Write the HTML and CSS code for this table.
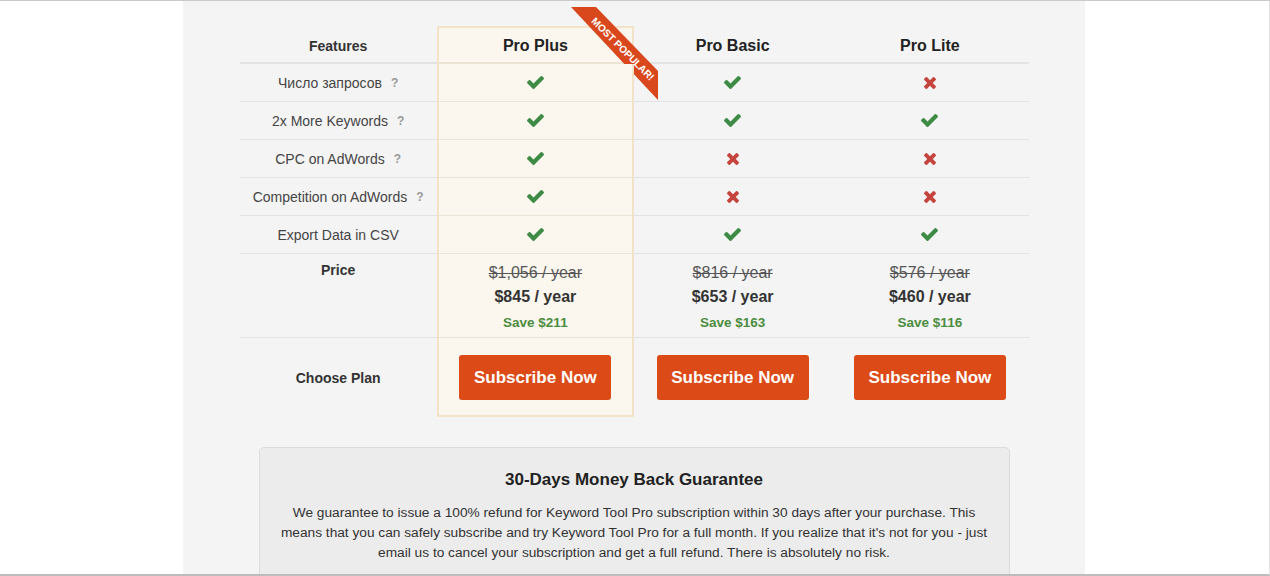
FILE: index.html
```html
<!DOCTYPE html>
<html lang="en">
<head>
    <meta charset="UTF-8">
    <meta name="viewport" content="width=device-width, initial-scale=1.0">
    <title>Keyword Tool Pro - Pricing</title>
    <link rel="stylesheet" href="styles.css">
</head>
<body>
    <div class="page">
        <div class="panel">
            <div class="pricing">
                <!-- header -->
                <div class="cell head">Features</div>
                <div class="cell head plan hl hl-top">
                    Pro Plus
                    <svg class="ribbon" width="87" height="93" viewBox="0 0 87 93">
                        <polygon points="0,0 25,0 87,64 87,93" fill="#d9481c"/>
                        <text x="52" y="42" transform="rotate(45 52 42)" text-anchor="middle" dominant-baseline="central">MOST POPULAR!</text>
                    </svg>
                </div>
                <div class="cell head plan">Pro Basic</div>
                <div class="cell head plan">Pro Lite</div>

                <!-- features -->
                <div class="cell feature">Число запросов <span class="hint">?</span></div>
                <div class="cell hl"><svg class="ok" viewBox="121 334 1550 1188"><path d="M1671 566q0 40-28 68l-724 724-136 136q-28 28-68 28t-68-28l-136-136-362-362q-28-28-28-68t28-68l136-136q28-28 68-28t68 28l294 295 656-657q28-28 68-28t68 28l136 136q28 28 28 68z"/></svg></div>
                <div class="cell"><svg class="ok" viewBox="121 334 1550 1188"><path d="M1671 566q0 40-28 68l-724 724-136 136q-28 28-68 28t-68-28l-136-136-362-362q-28-28-28-68t28-68l136-136q28-28 68-28t68 28l294 295 656-657q28-28 68-28t68 28l136 136q28 28 28 68z"/></svg></div>
                <div class="cell"><svg class="no" viewBox="302 366 1188 1188"><path d="M1490 1322q0 40-28 68l-136 136q-28 28-68 28t-68-28l-294-294-294 294q-28 28-68 28t-68-28l-136-136q-28-28-28-68t28-68l294-294-294-294q-28-28-28-68t28-68l136-136q28-28 68-28t68 28l294 294 294-294q28-28 68-28t68 28l136 136q28 28 28 68t-28 68l-294 294 294 294q28 28 28 68z"/></svg></div>

                <div class="cell feature">2x More Keywords <span class="hint">?</span></div>
                <div class="cell hl"><svg class="ok" viewBox="121 334 1550 1188"><path d="M1671 566q0 40-28 68l-724 724-136 136q-28 28-68 28t-68-28l-136-136-362-362q-28-28-28-68t28-68l136-136q28-28 68-28t68 28l294 295 656-657q28-28 68-28t68 28l136 136q28 28 28 68z"/></svg></div>
                <div class="cell"><svg class="ok" viewBox="121 334 1550 1188"><path d="M1671 566q0 40-28 68l-724 724-136 136q-28 28-68 28t-68-28l-136-136-362-362q-28-28-28-68t28-68l136-136q28-28 68-28t68 28l294 295 656-657q28-28 68-28t68 28l136 136q28 28 28 68z"/></svg></div>
                <div class="cell"><svg class="ok" viewBox="121 334 1550 1188"><path d="M1671 566q0 40-28 68l-724 724-136 136q-28 28-68 28t-68-28l-136-136-362-362q-28-28-28-68t28-68l136-136q28-28 68-28t68 28l294 295 656-657q28-28 68-28t68 28l136 136q28 28 28 68z"/></svg></div>

                <div class="cell feature">CPC on AdWords <span class="hint">?</span></div>
                <div class="cell hl"><svg class="ok" viewBox="121 334 1550 1188"><path d="M1671 566q0 40-28 68l-724 724-136 136q-28 28-68 28t-68-28l-136-136-362-362q-28-28-28-68t28-68l136-136q28-28 68-28t68 28l294 295 656-657q28-28 68-28t68 28l136 136q28 28 28 68z"/></svg></div>
                <div class="cell"><svg class="no" viewBox="302 366 1188 1188"><path d="M1490 1322q0 40-28 68l-136 136q-28 28-68 28t-68-28l-294-294-294 294q-28 28-68 28t-68-28l-136-136q-28-28-28-68t28-68l294-294-294-294q-28-28-28-68t28-68l136-136q28-28 68-28t68 28l294 294 294-294q28-28 68-28t68 28l136 136q28 28 28 68t-28 68l-294 294 294 294q28 28 28 68z"/></svg></div>
                <div class="cell"><svg class="no" viewBox="302 366 1188 1188"><path d="M1490 1322q0 40-28 68l-136 136q-28 28-68 28t-68-28l-294-294-294 294q-28 28-68 28t-68-28l-136-136q-28-28-28-68t28-68l294-294-294-294q-28-28-28-68t28-68l136-136q28-28 68-28t68 28l294 294 294-294q28-28 68-28t68 28l136 136q28 28 28 68t-28 68l-294 294 294 294q28 28 28 68z"/></svg></div>

                <div class="cell feature">Competition on AdWords <span class="hint">?</span></div>
                <div class="cell hl"><svg class="ok" viewBox="121 334 1550 1188"><path d="M1671 566q0 40-28 68l-724 724-136 136q-28 28-68 28t-68-28l-136-136-362-362q-28-28-28-68t28-68l136-136q28-28 68-28t68 28l294 295 656-657q28-28 68-28t68 28l136 136q28 28 28 68z"/></svg></div>
                <div class="cell"><svg class="no" viewBox="302 366 1188 1188"><path d="M1490 1322q0 40-28 68l-136 136q-28 28-68 28t-68-28l-294-294-294 294q-28 28-68 28t-68-28l-136-136q-28-28-28-68t28-68l294-294-294-294q-28-28-28-68t28-68l136-136q28-28 68-28t68 28l294 294 294-294q28-28 68-28t68 28l136 136q28 28 28 68t-28 68l-294 294 294 294q28 28 28 68z"/></svg></div>
                <div class="cell"><svg class="no" viewBox="302 366 1188 1188"><path d="M1490 1322q0 40-28 68l-136 136q-28 28-68 28t-68-28l-294-294-294 294q-28 28-68 28t-68-28l-136-136q-28-28-28-68t28-68l294-294-294-294q-28-28-28-68t28-68l136-136q28-28 68-28t68 28l294 294 294-294q28-28 68-28t68 28l136 136q28 28 28 68t-28 68l-294 294 294 294q28 28 28 68z"/></svg></div>

                <div class="cell feature">Export Data in CSV</div>
                <div class="cell hl"><svg class="ok" viewBox="121 334 1550 1188"><path d="M1671 566q0 40-28 68l-724 724-136 136q-28 28-68 28t-68-28l-136-136-362-362q-28-28-28-68t28-68l136-136q28-28 68-28t68 28l294 295 656-657q28-28 68-28t68 28l136 136q28 28 28 68z"/></svg></div>
                <div class="cell"><svg class="ok" viewBox="121 334 1550 1188"><path d="M1671 566q0 40-28 68l-724 724-136 136q-28 28-68 28t-68-28l-136-136-362-362q-28-28-28-68t28-68l136-136q28-28 68-28t68 28l294 295 656-657q28-28 68-28t68 28l136 136q28 28 28 68z"/></svg></div>
                <div class="cell"><svg class="ok" viewBox="121 334 1550 1188"><path d="M1671 566q0 40-28 68l-724 724-136 136q-28 28-68 28t-68-28l-136-136-362-362q-28-28-28-68t28-68l136-136q28-28 68-28t68 28l294 295 656-657q28-28 68-28t68 28l136 136q28 28 28 68z"/></svg></div>

                <!-- prices -->
                <div class="cell price-row label">Price</div>
                <div class="cell price-row hl">
                    <span class="old">$1,056 / year</span>
                    <span class="now">$845 / year</span>
                    <span class="save">Save $211</span>
                </div>
                <div class="cell price-row">
                    <span class="old">$816 / year</span>
                    <span class="now">$653 / year</span>
                    <span class="save">Save $163</span>
                </div>
                <div class="cell price-row">
                    <span class="old">$576 / year</span>
                    <span class="now">$460 / year</span>
                    <span class="save">Save $116</span>
                </div>

                <!-- subscribe -->
                <div class="cell choose label">Choose Plan</div>
                <div class="cell choose hl hl-bottom"><a class="btn" href="#">Subscribe Now</a></div>
                <div class="cell choose"><a class="btn" href="#">Subscribe Now</a></div>
                <div class="cell choose"><a class="btn" href="#">Subscribe Now</a></div>
            </div>

            <div class="guarantee">
                <h3>30-Days Money Back Guarantee</h3>
                <p>We guarantee to issue a 100% refund for Keyword Tool Pro subscription within 30 days after your purchase. This means that you can safely subscribe and try Keyword Tool Pro for a full month. If you realize that it's not for you - just email us to cancel your subscription and get a full refund. There is absolutely no risk.</p>
            </div>
        </div>
    </div>
</body>
</html>
```

FILE: styles.css
```css
body, html {
    margin: 0;
    padding: 0;
    background: #fff;
    font-family: 'Liberation Sans', Arial, sans-serif;
    color: #333;
}

.page {
    height: 576px;
    box-sizing: border-box;
    border-top: 1px solid #c9c9c9;
    border-bottom: 2px solid #bdbdbd;
    border-right: 1px solid #e2e2e2;
    overflow: hidden;
}

.panel {
    margin-left: 183px;
    width: 902px;
    height: 100%;
    background: #f4f4f4;
    padding-top: 25px;
    box-sizing: border-box;
}

.pricing {
    width: 789px;
    margin: 0 auto;
    display: grid;
    grid-template-columns: repeat(4, 1fr);
}

.cell {
    box-sizing: border-box;
    height: 38px;
    border-bottom: 1px solid #e3e3e3;
    display: flex;
    align-items: center;
    justify-content: center;
    font-size: 14px;
    color: #444;
}

.head {
    padding-top: 3px;
    border-bottom: 2px solid #e3e3e3;
    font-weight: bold;
    color: #333;
}

.plan {
    font-size: 16px;
    color: #222;
}

.hl {
    position: relative;
    background: #fbf7ef;
    border-left: 2px solid #f3e3c8;
    border-right: 2px solid #f3e3c8;
    border-bottom-color: #ece4d6;
}

.hl-top {
    padding-top: 1px;
    border-top: 2px solid #f3e3c8;
}

.hl-bottom {
    padding-top: 2px;
    border-bottom: 2px solid #f3e3c8 !important;
}

.ribbon {
    position: absolute;
    left: 132px;
    top: -21px;
}

.ribbon text {
    fill: #fff;
    font-family: 'Liberation Sans', Arial, sans-serif;
    font-size: 10px;
    font-weight: bold;
}

.hint {
    margin-left: 9px;
    font-size: 12px;
    font-weight: bold;
    color: #999;
}

.ok {
    width: 17px;
    height: 13px;
    fill: #3d8b45;
}

.no {
    width: 12px;
    height: 12px;
    fill: #c5443d;
}

.price-row {
    height: 84px;
    flex-direction: column;
    justify-content: flex-start;
    padding-top: 9px;
}

.price-row.label {
    padding-top: 8px;
}

.label {
    font-weight: bold;
    color: #333;
}

.old {
    font-size: 16px;
    line-height: 20px;
    color: #555;
    text-decoration: line-through;
}

.now {
    margin-top: 4px;
    font-size: 16px;
    line-height: 20px;
    font-weight: bold;
    color: #333;
}

.save {
    margin-top: 6px;
    font-size: 13.5px;
    line-height: 20px;
    font-weight: bold;
    color: #4b8c3e;
}

.choose {
    height: 79px;
    border-bottom: none;
}

.btn {
    display: flex;
    align-items: center;
    justify-content: center;
    width: 152px;
    height: 45px;
    background: #dc4a17;
    border-radius: 3px;
    color: #fff;
    font-size: 17px;
    font-weight: bold;
    text-decoration: none;
}

.guarantee {
    width: 751px;
    box-sizing: border-box;
    margin: 30px auto 0;
    padding: 22px 18px;
    background: #ececec;
    border: 1px solid #dcdcdc;
    border-radius: 5px;
    text-align: center;
}

.guarantee h3 {
    margin: 0 0 13px;
    font-size: 17px;
    line-height: 20px;
    color: #222;
}

.guarantee p {
    margin: 0;
    font-size: 13.7px;
    line-height: 20px;
    color: #333;
}
```
